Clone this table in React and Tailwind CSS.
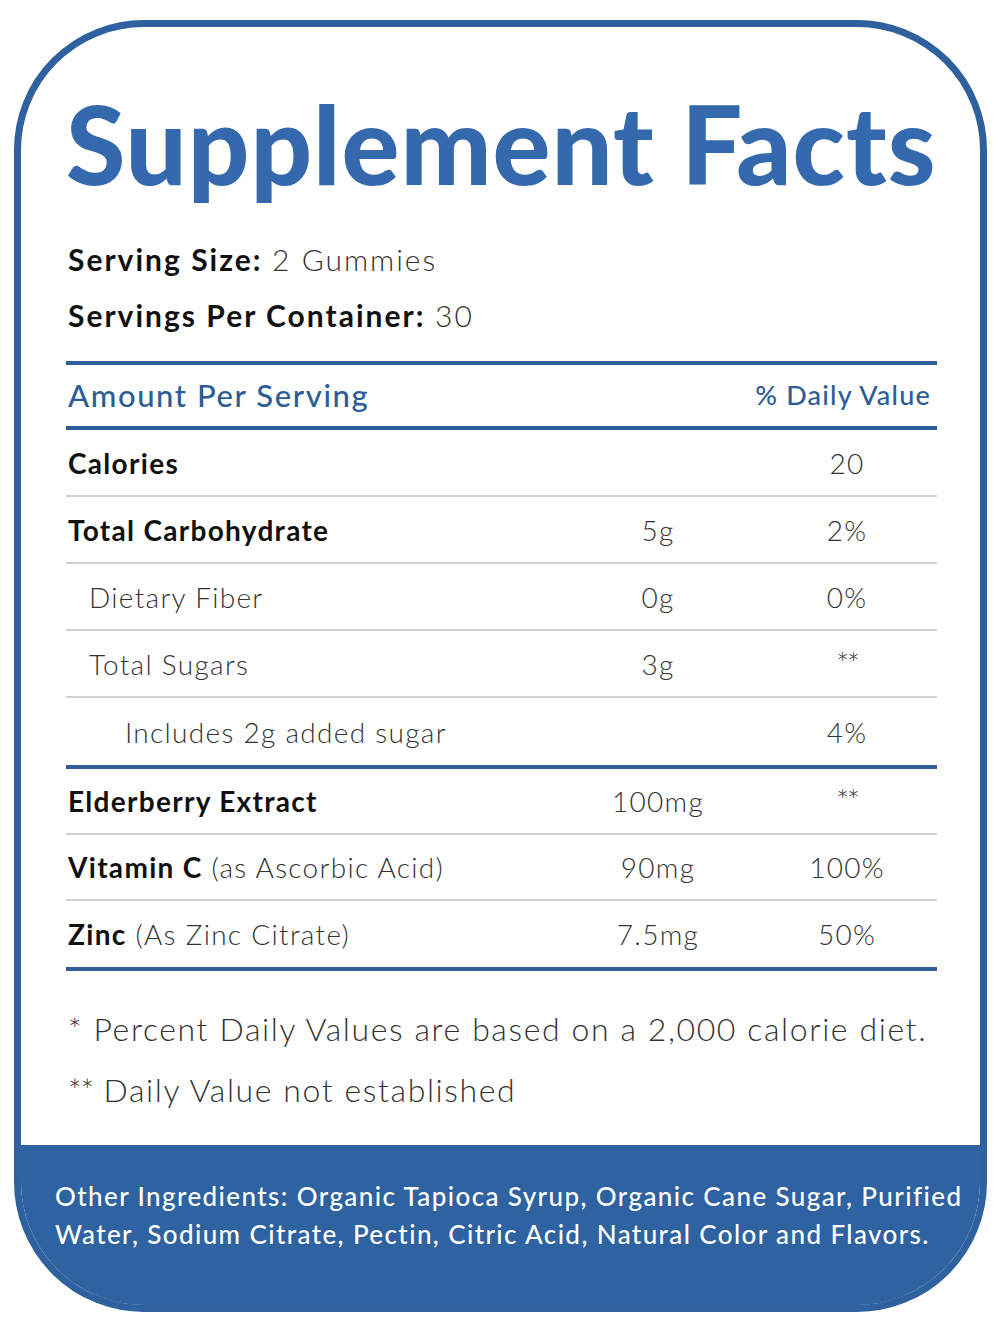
import React from "react";

const rowsTop = [
  { name: "Calories", amount: "", dv: "20" },
  { name: "Total Carbohydrate", amount: "5g", dv: "2%" },
  { name: "Dietary Fiber", indent: "pl-[23px]", amount: "0g", dv: "0%" },
  { name: "Total Sugars", indent: "pl-[23px]", amount: "3g", dv: "**" },
  { name: "Includes 2g added sugar", indent: "pl-[59px]", amount: "", dv: "4%" },
];

const rowsBottom = [
  { name: "Elderberry Extract", amount: "100mg", dv: "**" },
  { name: "Vitamin C", note: " (as Ascorbic Acid)", amount: "90mg", dv: "100%" },
  { name: "Zinc", note: " (As Zinc Citrate)", amount: "7.5mg", dv: "50%" },
];

const Row = ({ row, last, height }) => (
  <div
    className={`grid grid-cols-[1fr_140px_180px] gap-x-[29px] items-center ${height} ${
      last ? "" : "border-b-2 border-[#d0d0d0]"
    }`}
  >
    <div className={`pl-[2px] ${row.indent || ""}`}>
      {!row.indent ? (
        <span className="font-bold text-[#111]">{row.name}</span>
      ) : (
        <span className="font-light text-[#333]">{row.name}</span>
      )}
      {row.note && <span className="font-light text-[#333]">{row.note}</span>}
    </div>
    <div className="text-center font-light text-[#333]">{row.amount}</div>
    <div
      className={`text-center font-light text-[#333] ${
        row.dv === "**" ? "tracking-[-2px] text-[30px] -mt-[3px]" : ""
      }`}
    >
      {row.dv}
    </div>
  </div>
);

const App = () => {
  return (
    <main
      className="h-[1336px] w-full bg-white pt-[20px]"
      style={{ fontFamily: "Lato, 'Open Sans', sans-serif" }}
    >
      <div className="ml-[14px] flex h-[1292px] w-[973px] flex-col overflow-hidden rounded-[130px] border-[7px] border-[#2e619d]">
        <div className="flex-1 pl-[45px] pr-[43px]">
          <h1 className="mt-[62px] text-[108px] font-black leading-none tracking-[1px] text-[#3569ad]">
            Supplement Facts
          </h1>

          <div className="mt-[44px] space-y-[20px] text-[30px] leading-[36px] tracking-[2px] text-[#111]">
            <p className="pl-[2px]">
              <span className="font-bold">Serving Size:</span>{" "}
              <span className="font-light text-[#333]">2 Gummies</span>
            </p>
            <p className="pl-[2px]">
              <span className="font-bold">Servings Per Container:</span>{" "}
              <span className="font-light text-[#333]">30</span>
            </p>
          </div>

          <div className="mt-[28px] border-t-4 border-[#2c5d96]">
            <div className="flex h-[65px] items-center justify-between border-b-4 border-[#2c5d96] pl-[2px] pr-[6px]">
              <span className="text-[31px] font-medium tracking-[1.6px] text-[#2c5d96]">Amount Per Serving</span>
              <span className="text-[27px] font-medium tracking-[1.2px] text-[#2c5d96]">% Daily Value</span>
            </div>

            <div className="text-[28px] tracking-[1.3px]">
              {rowsTop.map((r, i) => (
                <Row key={r.name} row={r} last={i === rowsTop.length - 1} height="h-[67px]" />
              ))}
            </div>

            <div className="border-t-4 border-b-4 border-[#2c5d96] text-[28px] tracking-[1.3px]">
              {rowsBottom.map((r, i) => (
                <Row key={r.name} row={r} last={i === rowsBottom.length - 1} height="h-[66px]" />
              ))}
            </div>
          </div>

          <div className="mt-[39px] space-y-[23px] pl-[2px] text-[32px] font-light leading-[38px] tracking-[1.6px] text-[#333]">
            <p>* Percent Daily Values are based on a 2,000 calorie diet.</p>
            <p>
              <span className="tracking-[-1px]">**</span> Daily Value not established
            </p>
          </div>
        </div>

        <div className="h-[160px] bg-[#2f62a0] pl-[34px] pr-[4px] pt-[32px] text-[26px] font-medium leading-[38px] tracking-[1.4px] text-white">
          Other Ingredients: Organic Tapioca Syrup, Organic Cane Sugar, Purified
          <br />
          Water, Sodium Citrate, Pectin, Citric Acid, Natural Color and Flavors.
        </div>
      </div>
    </main>
  );
};

export default App;
